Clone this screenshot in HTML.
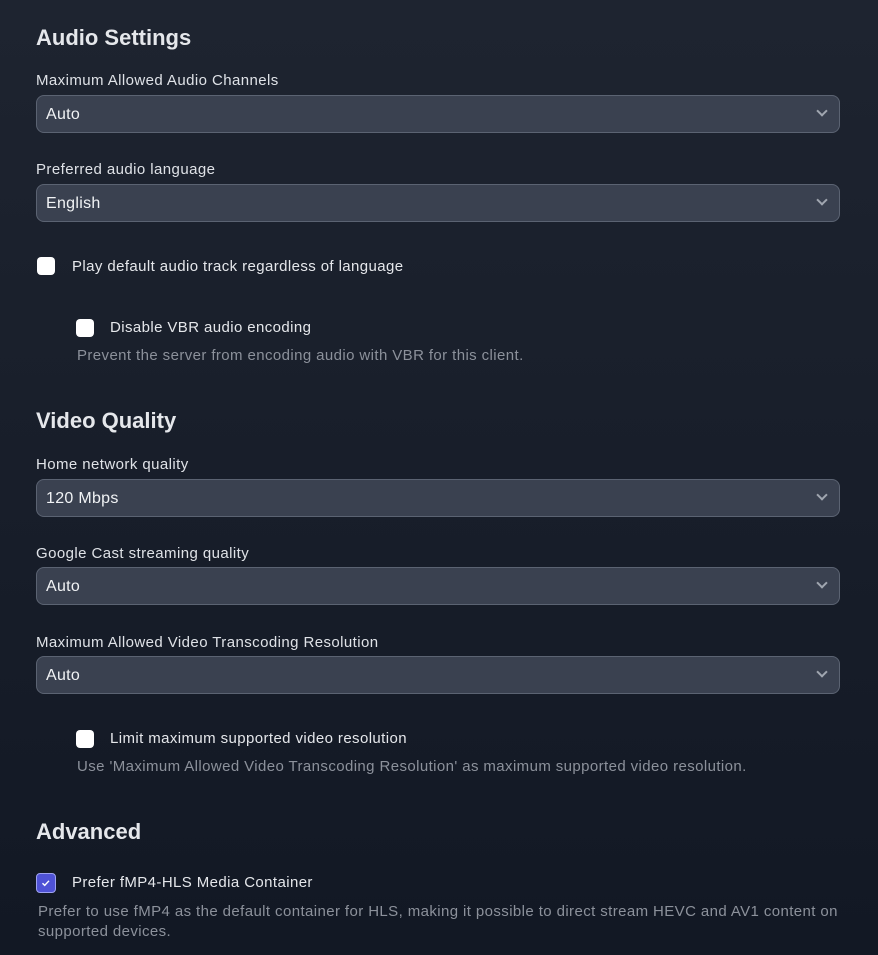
<!DOCTYPE html>
<html><head><style>
*{margin:0;padding:0;box-sizing:border-box}
body{width:878px;height:955px;overflow:hidden;background:linear-gradient(#1e2430,#121824);font-family:"Liberation Sans",sans-serif;color:#e5e7eb;position:relative}
h2{position:absolute;left:36px;font-size:22px;font-weight:bold;color:#e5e7eb}
.l{position:absolute;left:36px;font-size:15px;color:#dfe2e7;letter-spacing:0.42px}
.s{position:absolute;left:36px;width:804px;height:38px;background:#3a4150;border:1px solid #5b6372;border-radius:8px;font-size:16px;color:#f1f3f5;padding:10px 0 0 9px;letter-spacing:0.3px}
.s:after{content:"";position:absolute;right:13px;top:11px;width:6px;height:6px;border-right:2px solid #a0a6b0;border-bottom:2px solid #a0a6b0;transform:rotate(45deg)}
.cb{position:absolute;width:18px;height:18px;background:#fff;border-radius:4px}
.ct{position:absolute;font-size:15px;color:#e5e7eb;white-space:nowrap;letter-spacing:0.4px}
.d{position:absolute;font-size:15px;color:#8c919b;white-space:nowrap;letter-spacing:0.4px}
</style></head><body>
<h2 style="top:25px">Audio Settings</h2>
<div class="l" style="top:72px">Maximum Allowed Audio Channels</div>
<div class="s" style="top:95px">Auto</div>
<div class="l" style="top:161px">Preferred audio language</div>
<div class="s" style="top:184px">English</div>
<div class="cb" style="left:37px;top:257px"></div>
<div class="ct" style="left:72px;top:258px">Play default audio track regardless of language</div>
<div class="cb" style="left:76px;top:319px"></div>
<div class="ct" style="left:110px;top:319px">Disable VBR audio encoding</div>
<div class="d" style="left:77px;top:347px">Prevent the server from encoding audio with VBR for this client.</div>
<h2 style="top:408px">Video Quality</h2>
<div class="l" style="top:456px">Home network quality</div>
<div class="s" style="top:479px">120 Mbps</div>
<div class="l" style="top:545px">Google Cast streaming quality</div>
<div class="s" style="top:567px">Auto</div>
<div class="l" style="top:634px">Maximum Allowed Video Transcoding Resolution</div>
<div class="s" style="top:656px">Auto</div>
<div class="cb" style="left:76px;top:730px"></div>
<div class="ct" style="left:110px;top:730px">Limit maximum supported video resolution</div>
<div class="d" style="left:77px;top:758px">Use 'Maximum Allowed Video Transcoding Resolution' as maximum supported video resolution.</div>
<h2 style="top:819px">Advanced</h2>
<div class="cb" style="left:36px;top:873px;width:20px;height:20px;background:#4f52d6;border:1px solid #9ea2f0"><svg width="18" height="18" viewBox="0 0 18 18" style="position:absolute;left:0;top:0"><path d="M5.5 9.2l2.2 2.2 4.3-4.6" stroke="#fff" stroke-width="1.4" fill="none"/></svg></div>
<div class="ct" style="left:72px;top:874px">Prefer fMP4-HLS Media Container</div>
<div class="d" style="left:38px;top:902px;line-height:20px;white-space:normal;width:810px">Prefer to use fMP4 as the default container for HLS, making it possible to direct stream HEVC and AV1 content on supported devices.</div>
</body></html>
